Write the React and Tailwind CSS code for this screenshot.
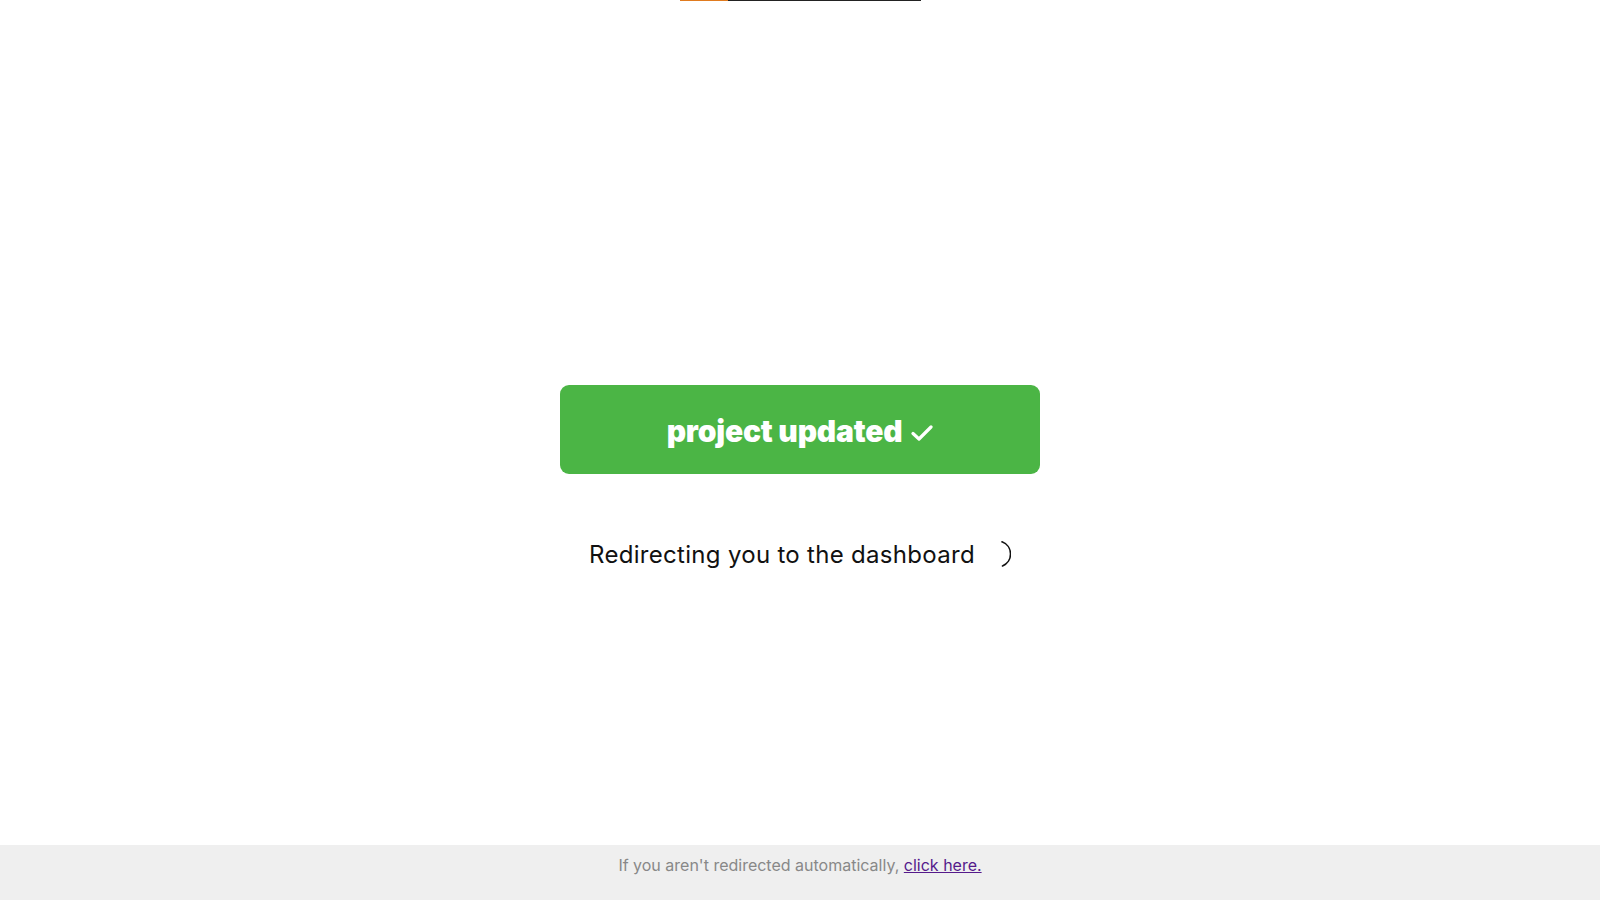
import React from 'react';

const Spinner = () => (
  <svg className="ml-[8px] -mt-[2px]" width="28" height="28" viewBox="0 0 28 28" fill="none">
    <path d="M19 1.8 A13 13 0 0 1 19.5 26" stroke="#111111" strokeWidth="1.6" strokeLinecap="round" />
  </svg>
);

const App = () => {
  return (
    <div className="w-full h-[900px] flex flex-col bg-white" style={{ fontFamily: 'Inter, "Noto Sans", sans-serif' }}>
      {/* Top progress bar */}
      <div className="h-[1px] w-full flex">
        <div className="w-[680px]" />
        <div className="w-[48px] bg-[#e07b1f]" />
        <div className="w-[193px] bg-[#222222]" />
      </div>

      {/* Main content */}
      <div className="flex-1 flex flex-col items-center pt-[384px]">
        <div className="w-[480px] h-[89px] rounded-[9px] bg-[#4bb545] flex items-center justify-center pt-[4px]">
          <span className="text-white text-[30px] font-black tracking-[-0.2px]">project updated</span>
          <svg className="ml-[9px] mt-[2px]" width="22" height="18" viewBox="0 0 22 18" fill="none">
            <path d="M2 9.5 L8 15 L20 3" stroke="white" strokeWidth="3.2" strokeLinecap="round" strokeLinejoin="round" />
          </svg>
        </div>
        <div className="mt-[63px] flex items-center pt-[2px]">
          <span className="text-[24px] leading-8 text-[#111111] tracking-[0.3px]">Redirecting you to the dashboard</span>
          <Spinner />
        </div>
      </div>

      {/* Footer */}
      <div className="h-[55px] bg-[#efefef] pt-[8px] text-center">
        <p className="text-[16px] leading-6 text-[#888888]">
          If you aren't redirected automatically,{' '}
          <a href="#" className="text-[#551a8b] underline">click here.</a>
        </p>
      </div>
    </div>
  );
};

export default App;
